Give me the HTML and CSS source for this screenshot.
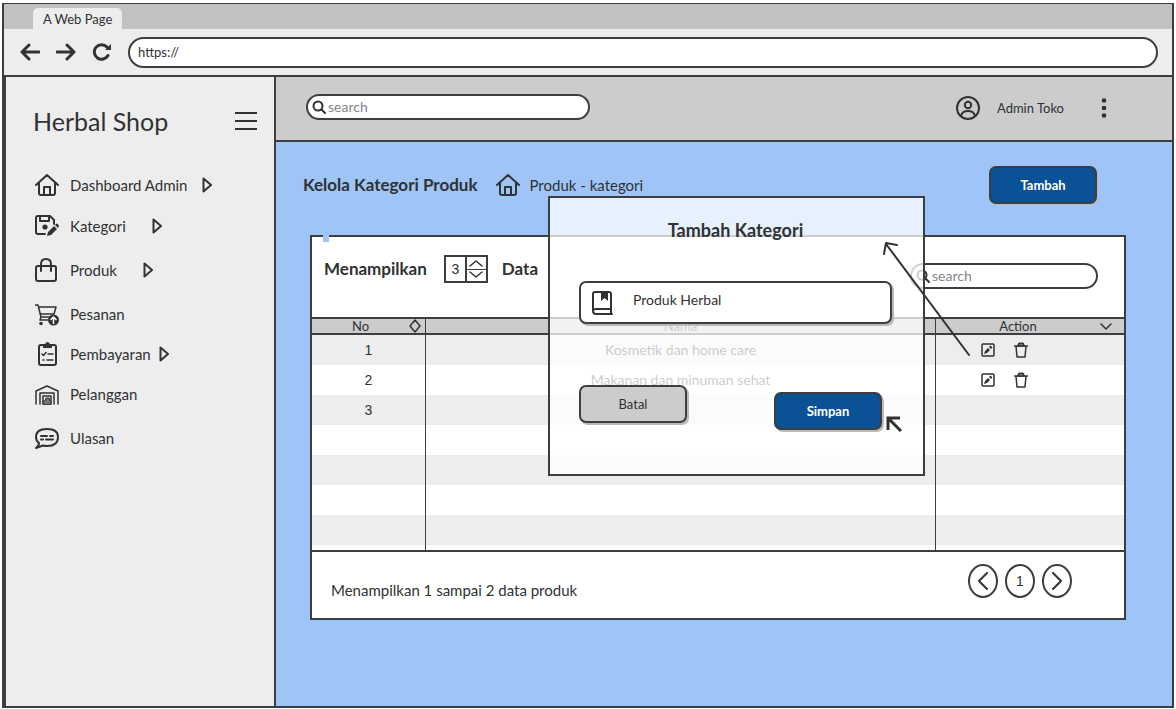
FILE: index.html
```html
<!DOCTYPE html>
<html lang="id">
<head>
<meta charset="utf-8">
<meta name="viewport" content="width=device-width, initial-scale=1">
<title>Herbal Shop</title>
<link rel="stylesheet" href="styles.css">
</head>
<body>
<svg class="defs" aria-hidden="true">
  <symbol id="home" viewBox="0 0 24 24"><path d="M1 12 12 2l11 10M4 10v10q0 2 2 2h12q2 0 2-2V10M9 22v-8h6v8"/></symbol>
  <symbol id="caret" viewBox="0 0 10 16"><path d="M1.500 1.500v13L9 8z"/></symbol>
  <symbol id="search" viewBox="0 0 14 14"><circle cx="6" cy="6" r="4.500"/><path d="m9.500 9.500 3.500 3.500"/></symbol>
  <symbol id="edit" viewBox="0 0 14 14"><rect x="1" y="1" width="12" height="12" rx="1"/><path class="solid" d="m3 11 1-3 3-3 2 2-3 3zM8 4l1.500-1.500 2 2L10 6z"/></symbol>
  <symbol id="trash" viewBox="0 0 14 16"><path d="M.5 4h13M2 4l1 11h8l1-11M4 4l1-2.500h4L10 4"/><path class="lid" d="M4 4l1-2.500h4L10 4z"/></symbol>
</svg>
<div class="window">
  <div class="tabs"><span class="tab">A Web Page</span></div>
  <div class="toolbar">
    <button class="plain" aria-label="Kembali"><svg class="nav-icon" viewBox="0 0 20 18"><path d="M19 9H2M9 2 2 9l7 7"/></svg></button>
    <button class="plain" aria-label="Maju"><svg class="nav-icon" viewBox="0 0 20 18"><path d="M1 9h17M11 2l7 7-7 7"/></svg></button>
    <button class="plain" aria-label="Muat ulang"><svg class="nav-icon" viewBox="0 0 20 18"><path d="M16 12.500A7.300 7.300 0 1 1 15 4"/><path class="solid" d="M19 1v6h-6z"/></svg></button>
    <input class="address" type="text" aria-label="Alamat" value="https://">
  </div>
  <div class="app">
    <aside class="sidebar">
      <div class="brand">
        <span class="brand-name">Herbal Shop</span>
        <button class="plain" aria-label="Menu"><svg class="burger" viewBox="0 0 22 20"><path d="M0 2h22M0 10h22M0 18h22"/></svg></button>
      </div>
      <nav class="menu">
        <a href="#"><svg class="icon" viewBox="0 0 24 24"><use href="#home"/></svg><span>Dashboard Admin</span><svg class="caret" viewBox="0 0 10 16"><use href="#caret"/></svg></a>
        <a href="#" class="wide"><svg class="icon" viewBox="0 0 24 24"><path d="M10 20H3q-2 0-2-2V4q0-2 2-2h12l4 4v4M5 2v5h9V2"/><circle class="solid" cx="10" cy="13" r="2.600"/><path class="solid" d="m12 22 1-4 6-6 3 3-6 6zM20 11l1.500-1.500q2 0 2.500 2.500L23 14z"/></svg><span>Kategori</span><svg class="caret" viewBox="0 0 10 16"><use href="#caret"/></svg></a>
        <a href="#" class="wide"><svg class="icon" viewBox="0 0 24 24"><rect x="1" y="8" width="20" height="15" rx="2"/><path d="M6 13V6q0-5 5-5t5 5v7"/></svg><span>Produk</span><svg class="caret" viewBox="0 0 10 16"><use href="#caret"/></svg></a>
        <a href="#"><svg class="icon" viewBox="0 0 24 24"><path class="thin" d="M0 3h3l3 12h8M3.500 5H21l-2 7M5 12h14M6 15l-1 3h8"/><circle class="solid" cx="6" cy="21.500" r="1.800"/><circle class="solid" cx="18.500" cy="18" r="5.500"/><path class="light" d="M18.500 21.500v-6M16 17.500l2.500-2.500 2.500 2.500"/></svg><span>Pesanan</span></a>
        <a href="#" class="near"><svg class="icon" viewBox="0 0 24 24"><rect x="4" y="3" width="17" height="20" rx="2"/><path class="solid" d="M8 6V2h2q2.500-4 5 0h2v4z"/><path class="thin" d="m7 12 1.500 1.500L11 10.500M13 12h5M8 18h1M12 18h6"/></svg><span>Pembayaran</span><svg class="caret" viewBox="0 0 10 16"><use href="#caret"/></svg></a>
        <a href="#"><svg class="icon" viewBox="0 0 24 24"><path class="thin" d="M1 22V9l11-5 11 5v13M5 22V11h14v11M8 22v-8h8v8"/><path class="shade" d="M8 22v-3h2l1-3h3l1 3h1v3z"/></svg><span>Pelanggan</span></a>
        <a href="#"><svg class="icon" viewBox="0 0 24 24"><path d="M4 17Q1 15 1 11q0-8 11-8t11 8q0 9-11 9-2 0-4-.5L1 22q3-2 3-5z"/><path d="M6 10h6M15 10h3M6 13.500h2M11 13.500h7"/></svg><span>Ulasan</span></a>
      </nav>
    </aside>
    <div class="page">
      <header class="topbar">
        <label class="search"><svg class="glass" viewBox="0 0 14 14"><use href="#search"/></svg><input type="search" placeholder="search" aria-label="Cari"></label>
        <div class="account">
          <svg class="avatar" viewBox="0 0 24 24"><circle cx="12" cy="12" r="11"/><circle cx="12" cy="9" r="3.200"/><path d="M5 20q1-5 7-5t7 5"/></svg>
          <span class="user">Admin Toko</span>
          <button class="plain" aria-label="Opsi"><svg class="dots" viewBox="0 0 6 20"><circle cx="3" cy="2.500" r="2.300"/><circle cx="3" cy="10" r="2.300"/><circle cx="3" cy="17.500" r="2.300"/></svg></button>
        </div>
      </header>
      <main class="content">
        <div class="heading">
          <h1>Kelola Kategori Produk</h1>
          <svg class="icon" viewBox="0 0 24 24"><use href="#home"/></svg>
          <span class="crumb">Produk - kategori</span>
          <button class="button primary">Tambah</button>
        </div>
        <section class="panel">
          <div class="filters">
            <div class="count">
              <label for="rows">Menampilkan</label>
              <div class="stepper">
                <input id="rows" type="number" value="3">
                <div class="steps">
                  <button aria-label="Tambah baris"><svg viewBox="0 0 14 8"><path d="m1 7 6-5 6 5"/></svg></button>
                  <button aria-label="Kurangi baris"><svg viewBox="0 0 14 8"><path d="m1 1 6 5 6-5"/></svg></button>
                </div>
              </div>
              <span class="unit">Data</span>
            </div>
            <label class="search small"><svg class="glass" viewBox="0 0 14 14"><use href="#search"/></svg><input type="search" placeholder="search" aria-label="Cari kategori"></label>
          </div>
          <table>
            <colgroup><col class="col-no"><col><col class="col-action"></colgroup>
            <thead>
              <tr>
                <th><div class="th"><span>No</span><svg class="sort" viewBox="0 0 12 14"><path d="m6 1 5 6-5 6-5-6z"/></svg></div></th>
                <th>Nama</th>
                <th><div class="th th-end"><span>Action</span><svg class="sort" viewBox="0 0 12 14"><path d="m1 5 5 5 5-5"/></svg></div></th>
              </tr>
            </thead>
            <tbody>
              <tr><td>1</td><td>Kosmetik dan home care</td><td><div class="actions"><button class="plain" aria-label="Ubah"><svg class="edit" viewBox="0 0 14 14"><use href="#edit"/></svg></button><button class="plain" aria-label="Hapus"><svg class="trash" viewBox="0 0 14 16"><use href="#trash"/></svg></button></div></td></tr>
              <tr><td>2</td><td>Makanan dan minuman sehat</td><td><div class="actions"><button class="plain" aria-label="Ubah"><svg class="edit" viewBox="0 0 14 14"><use href="#edit"/></svg></button><button class="plain" aria-label="Hapus"><svg class="trash" viewBox="0 0 14 16"><use href="#trash"/></svg></button></div></td></tr>
              <tr><td>3</td><td></td><td></td></tr>
              <tr><td></td><td></td><td></td></tr>
              <tr><td></td><td></td><td></td></tr>
              <tr><td></td><td></td><td></td></tr>
              <tr><td></td><td></td><td></td></tr>
              <tr class="last"><td></td><td></td><td></td></tr>
            </tbody>
          </table>
          <div class="panel-foot">
            <p>Menampilkan 1 sampai 2 data produk</p>
            <div class="pager">
              <button aria-label="Sebelumnya"><svg viewBox="0 0 12 18"><path d="M10 1 2 9l8 8"/></svg></button>
              <button>1</button>
              <button aria-label="Berikutnya"><svg viewBox="0 0 12 18"><path d="m2 1 8 8-8 8"/></svg></button>
            </div>
          </div>
        </section>
        <section class="modal" role="dialog" aria-labelledby="modal-title">
          <h2 id="modal-title">Tambah Kategori</h2>
          <label class="field">
            <svg class="book" viewBox="0 0 22 24"><path d="M20 18V3q0-2-2-2H4Q2 1 2 3v17q0 3 3 3h16M2 20q0-2 3-2h15v5"/><path class="solid" d="M10 1h7v9l-3.500-3L10 10z"/></svg>
            <input type="text" value="Produk Herbal" aria-label="Nama kategori">
          </label>
          <div class="modal-actions">
            <button class="button">Batal</button>
            <button class="button primary">Simpan</button>
          </div>
        </section>
        <svg class="pointer" viewBox="0 0 88 116" aria-hidden="true"><path d="M86 114 3 3M1 13 3 2l11 2"/></svg>
        <svg class="cursor" viewBox="0 0 16 16" aria-hidden="true"><path d="M15 15 2 2M2 14V2h12"/></svg>
      </main>
    </div>
  </div>
</div>
</body>
</html>
```

FILE: styles.css
```css
:root {
  --ink: #303234;
  --line: #3c3f42;
  --paper: #ededed;
  --gray: #cccccc;
  --sky: #9fc4f7;
  --blue: #0a5295;
}
* { box-sizing: border-box; }
body {
  margin: 0;
  padding: 3px 2px 1px;
  background: #fff;
  color: var(--ink);
  font: 15px/24px Lato, sans-serif;
}
button, input { font: inherit; color: inherit; }
button { cursor: pointer; }
input { min-width: 0; border: 0; padding: 0; background: transparent; outline: 0; }
h1, h2, p { margin: 0; }
svg { display: block; flex: none; fill: none; stroke: var(--ink); stroke-width: 2; stroke-linecap: round; stroke-linejoin: round; }
.solid { fill: var(--ink); stroke: none; }
.thin { stroke-width: 1.5; }
.light { stroke: #fff; stroke-width: 1.5; }
.shade { fill: #777; stroke-width: 1; }
.lid { fill: #888; }
.defs { position: absolute; width: 0; height: 0; }
.plain { border: 0; padding: 0; background: none; }

.window {
  display: flex;
  flex-direction: column;
  min-height: calc(100vh - 4px);
  border: 2px solid var(--line);
  border-top-width: 1px;
  background: var(--paper);
}
.tabs { display: flex; align-items: flex-end; height: 25px; padding-left: 29px; background: #c1c1c1; }
.tab { padding: 1px 10px 0; border-radius: 5px 5px 0 0; background: var(--paper); font-size: 13px; line-height: 20px; }
.toolbar { display: flex; align-items: center; gap: 16px; height: 48px; padding: 0 14px 0 16px; border-bottom: 2px solid var(--line); }
.nav-icon { width: 20px; height: 18px; stroke-width: 3; }
.address { flex: 1; height: 31px; padding: 0 8px; border: 2px solid var(--line); border-radius: 16px; background: #fff; font-size: 13px; }

.app { display: flex; flex: 1; }
.sidebar { flex: none; width: 272px; border-left: 2px solid var(--line); border-right: 2px solid var(--line); }
.brand { display: flex; align-items: center; justify-content: space-between; height: 32px; margin: 28px 17px 0 27px; }
.brand-name { font-size: 25px; line-height: 32px; }
.burger { width: 22px; height: 20px; }
.menu { display: grid; grid-template-rows: 41px 44px 44px 40px 40px 44px 24px; margin: 36px 0 0 29px; }
.menu a { display: flex; align-items: center; height: 24px; color: inherit; text-decoration: none; }
.menu span { margin-left: 11px; }
.icon { width: 24px; height: 24px; }
.caret { width: 10px; height: 16px; margin-left: 14px; }
.wide .caret { margin-left: 26px; }
.near .caret { margin-left: 8px; }

.page { display: flex; flex: 1; flex-direction: column; min-width: 0; }
.topbar { display: flex; align-items: center; justify-content: space-between; height: 65px; padding: 0 65px 4px 30px; border-bottom: 2px solid var(--line); background: var(--gray); }
.search { display: flex; align-items: center; gap: 2px; width: 284px; height: 26px; padding-left: 4px; border: 2px solid var(--line); border-radius: 13px; background: #fff; }
.search input { flex: 1; font-size: 14px; line-height: 20px; }
.search input::placeholder { color: #85868b; opacity: 1; }
.glass { width: 14px; height: 14px; }
.small { width: 188px; }
.account { display: flex; align-items: center; padding-top: 2px; }
.avatar { width: 24px; height: 24px; }
.user { margin: 0 37px 0 17px; font-size: 13px; }
.dots { width: 6px; height: 20px; fill: var(--ink); stroke: none; }

.content { position: relative; flex: 1; padding: 24px 46px 40px 34px; background: var(--sky); }
.heading { display: flex; align-items: center; height: 38px; margin: 0 29px 31px -7px; }
h1 { margin-right: 18px; font-size: 17px; line-height: 24px; }
.crumb { margin-left: 10px; }
.button { width: 108px; height: 38px; border: 2px solid var(--line); border-radius: 7px; background: var(--gray); font-size: 13px; box-shadow: 2px 2px 0 #bababa; }
.primary { background: var(--blue); color: #fff; font-weight: 700; }
.heading .button { margin-left: auto; box-shadow: 1px 1px 0 #bababa; }

.panel { position: relative; border: 2px solid var(--line); background: #fff; }
.panel::before { content: ""; position: absolute; top: -2px; left: 11px; width: 6px; height: 7px; background: var(--sky); }
.filters { display: flex; justify-content: space-between; height: 80px; padding: 18px 26px 28px 12px; }
.filters .search { align-self: flex-end; }
.count { display: flex; align-items: center; height: 28px; font-size: 17px; font-weight: 700; }
.stepper { display: flex; width: 44px; height: 28px; margin: 0 14px 0 17px; border: 2px solid var(--line); font: 14px/20px "Liberation Sans", Arial, sans-serif; }
.stepper input { flex: 1; width: 20px; text-align: center; appearance: textfield; -moz-appearance: textfield; }
.stepper input::-webkit-inner-spin-button { appearance: none; display: none; }
.steps { display: flex; flex-direction: column; width: 21px; border-left: 2px solid var(--line); }
.steps button { display: flex; flex: 1; align-items: center; justify-content: center; padding: 0; border: 0; background: none; }
.steps button + button { border-top: 1px solid var(--line); }
.steps svg { width: 14px; height: 8px; stroke-width: 1.5; }

table { width: 100%; border-collapse: separate; border-spacing: 0; table-layout: fixed; border-bottom: 2px solid var(--line); }
.col-no { width: 114px; }
.col-action { width: 188px; }
th, td { padding: 0; text-align: center; border-right: 1px solid var(--line); }
th:last-child, td:last-child { border-right: 0; }
th { height: 18px; border-top: 2px solid var(--line); border-bottom: 2px solid var(--line); background: var(--gray); font-size: 13px; line-height: 14px; font-weight: 400; }
.th { display: flex; align-items: center; padding-right: 4px; }
.th-end { padding-right: 12px; }
.th span { flex: 1; }
.sort { width: 12px; height: 14px; stroke-width: 1.5; }
td { height: 30px; font-size: 14px; line-height: 20px; }
td:first-child { font-family: "Liberation Sans", Arial, sans-serif; }
tbody tr:nth-child(odd) { background: var(--paper); }
.last td { height: 5px; }
.actions { display: flex; align-items: center; gap: 19px; padding-left: 45px; }
.edit { width: 14px; height: 14px; stroke-width: 1.5; }
.trash { width: 14px; height: 16px; stroke-width: 1.5; }

.panel-foot { display: flex; align-items: flex-end; justify-content: space-between; padding: 12px 52px 20px 19px; }
.panel-foot p { line-height: 16px; }
.pager { display: flex; gap: 7px; }
.pager button { display: flex; align-items: center; justify-content: center; width: 30px; height: 34px; padding: 0; border: 2px solid var(--line); border-radius: 50%; background: none; font: 14px/20px "Liberation Sans", Arial, sans-serif; }
.pager svg { width: 12px; height: 18px; }

.modal { position: absolute; top: 54px; left: 272px; width: 377px; padding: 20px 31px 44px 29px; border: 2px solid var(--line); background: rgba(255, 255, 255, 0.75); }
h2 { font-size: 18px; line-height: 24px; text-align: center; }
.field { display: flex; align-items: center; height: 43px; margin-top: 39px; padding: 0 10px; border: 2px solid var(--line); border-radius: 7px; background: #fff; box-shadow: 2px 2px 0 #bababa; }
.book { width: 22px; height: 24px; }
.field input { flex: 1; margin-left: 20px; padding-bottom: 6px; font-size: 14px; line-height: 20px; }
.modal-actions { display: flex; justify-content: space-between; height: 45px; margin: 61px 10px 0 0; }
.modal-actions .primary { align-self: flex-end; }
.pointer { position: absolute; top: 99px; left: 607px; width: 88px; height: 116px; }
.cursor { position: absolute; top: 274px; left: 610px; width: 16px; height: 16px; stroke-width: 3; stroke-linecap: butt; stroke-linejoin: miter; }
```
